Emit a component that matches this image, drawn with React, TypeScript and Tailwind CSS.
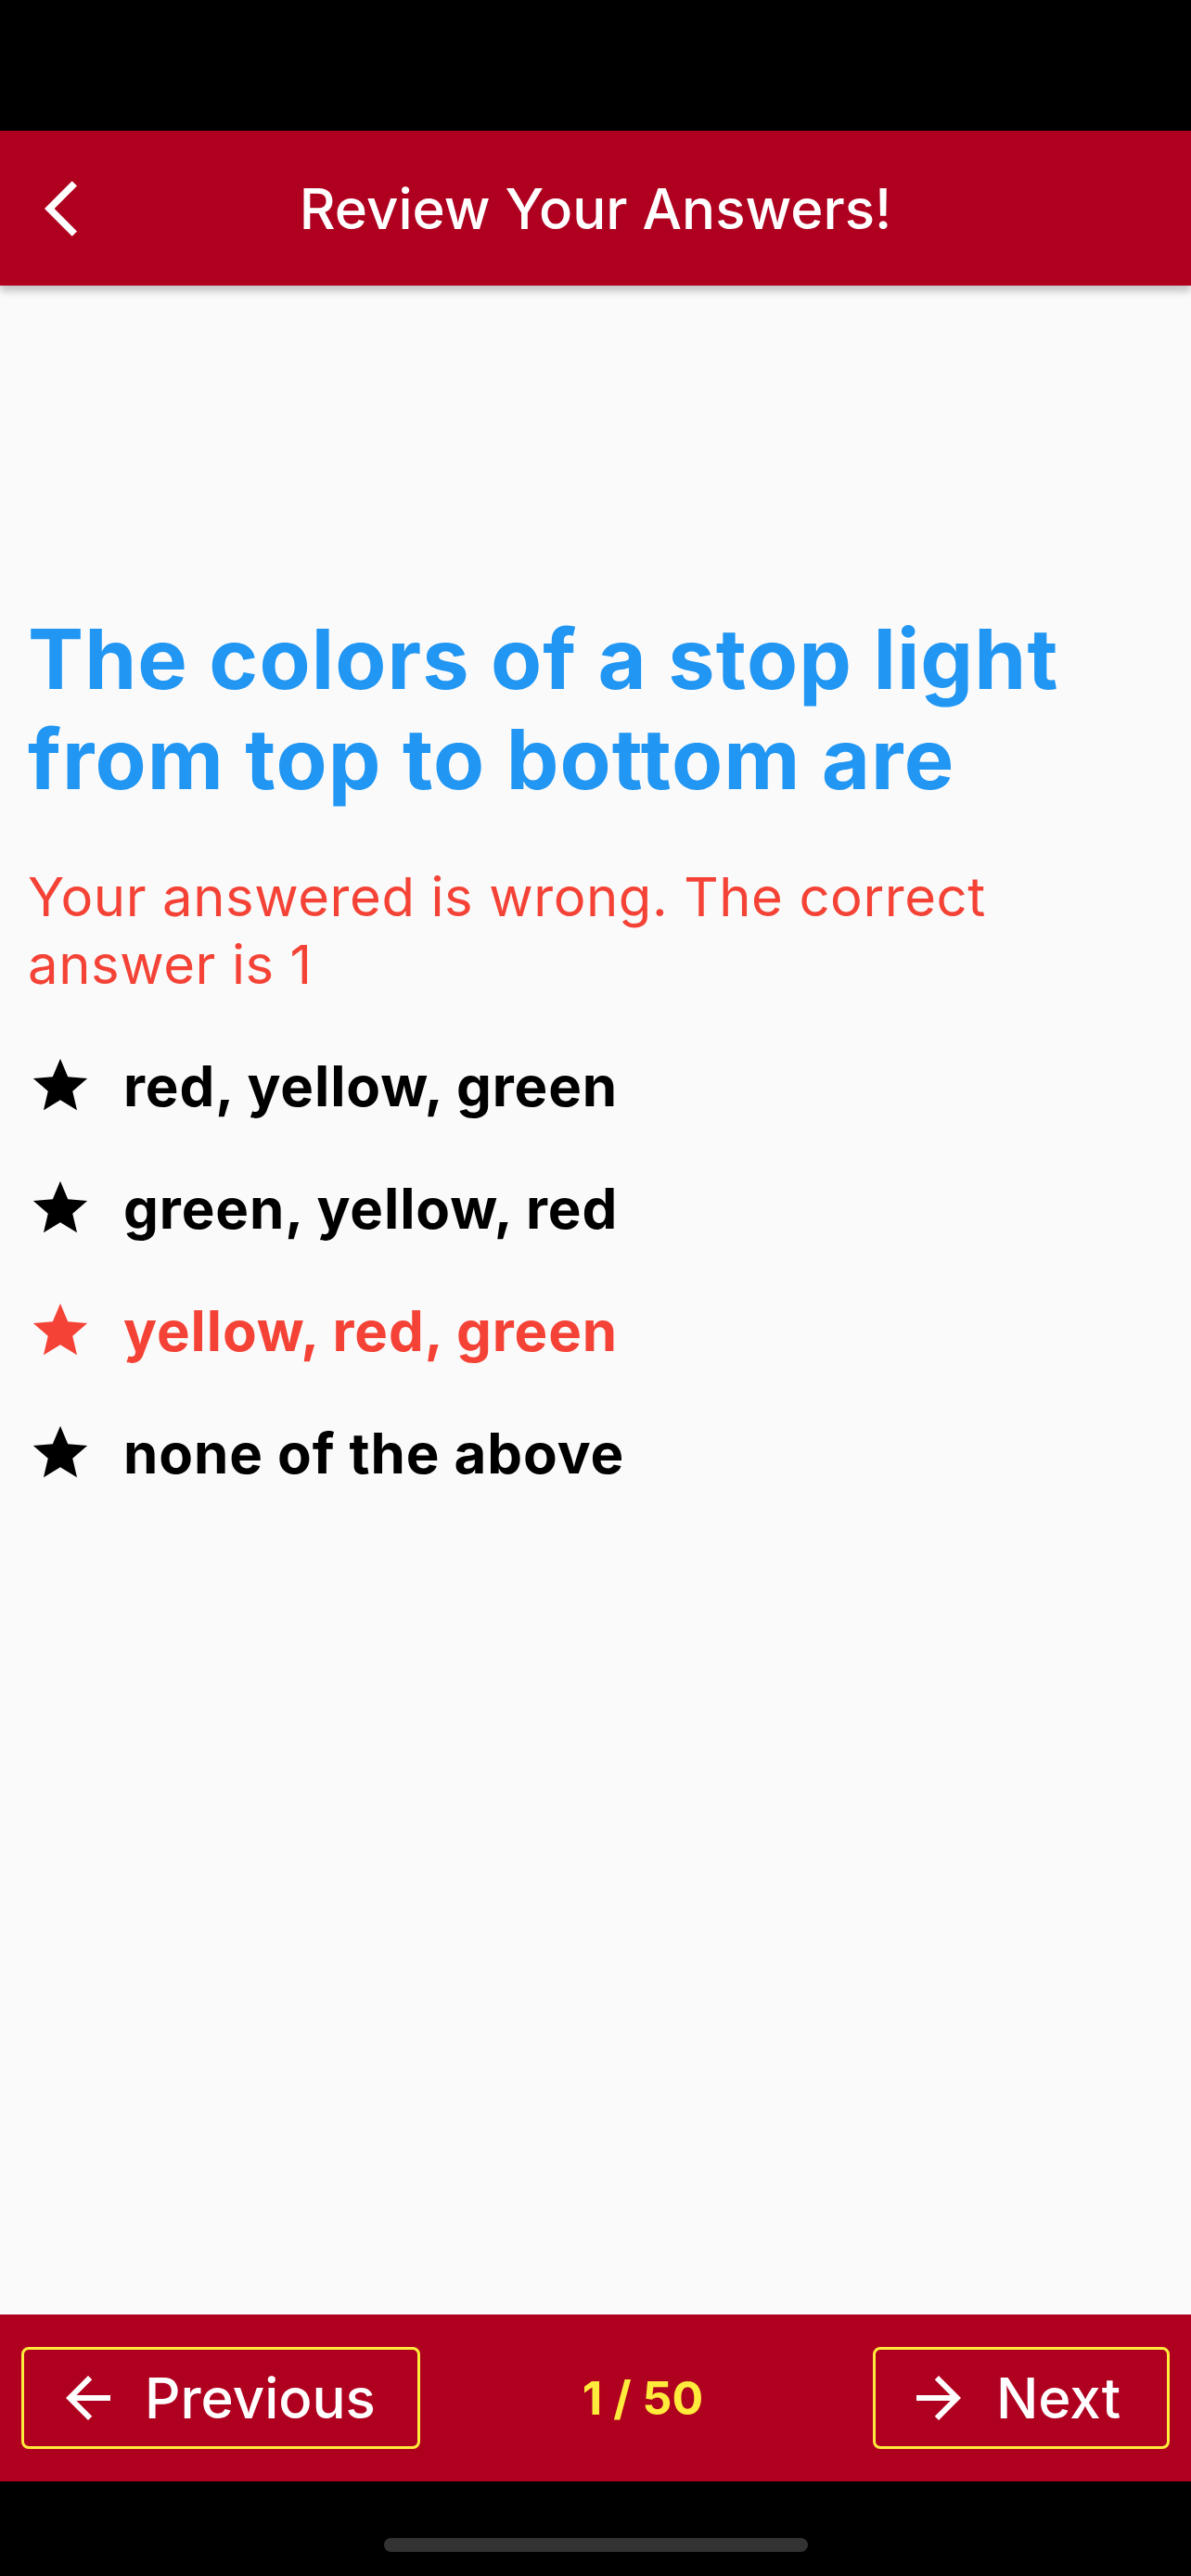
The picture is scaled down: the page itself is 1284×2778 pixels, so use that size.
import React from "react";

const options = [
    { text: "red, yellow, green", wrong: false },
    { text: "green, yellow, red", wrong: false },
    { text: "yellow, red, green", wrong: true },
    { text: "none of the above", wrong: false },
];

const Star = ({ color }: { color: string }) => (
    <svg width="70" height="70" viewBox="0 0 24 24" className="shrink-0">
        <path fill={color} d="M12 17.27L18.18 21l-1.64-7.03L22 9.24l-7.19-.61L12 2 9.19 8.63 2 9.24l5.46 4.73L5.82 21z" />
    </svg>
);

const App = () => {
    return (
        <div className="w-[1284px] h-[2778px] flex flex-col bg-[#fafafa]" style={{ fontFamily: "Inter, 'Noto Sans', sans-serif" }}>
            {/* status bar */}
            <div className="h-[141px] bg-black shrink-0" />

            {/* app bar */}
            <div className="h-[167px] shrink-0 bg-[#b00020] grid grid-cols-[168px_1fr_168px] items-center relative z-10 shadow-[0_6px_8px_rgba(0,0,0,0.22)]">
                <div className="pl-[48px] flex items-center">
                    <svg width="72" height="72" viewBox="0 0 24 24">
                        <path fill="#ffffff" d="M11.67 3.87L9.9 2.1 0 12l9.9 9.9 1.77-1.77L3.54 12z" />
                    </svg>
                </div>
                <div className="text-center text-white text-[60px] font-medium">Review Your Answers!</div>
                <div />
            </div>

            {/* content */}
            <div className="flex-1 px-[30px] pt-[349px]">
                <h1 className="text-[90px] leading-[108px] font-bold text-[#2196f3] tracking-[0.012em]">
                    The colors of a stop light from top to bottom are
                </h1>
                <p className="mt-[58px] text-[58px] leading-[73px] text-[#f44336] tracking-[0.01em]">
                    Your answered is wrong. The correct answer is 1
                </p>
                <div className="mt-[28px] flex flex-col">
                    {options.map((o, i) => (
                        <div key={i} className="h-[132px] flex items-center">
                            <Star color={o.wrong ? "#f44336" : "#000000"} />
                            <span className={"ml-[33px] text-[60px] leading-[72px] font-bold tracking-[0.015em] " + (o.wrong ? "text-[#f44336]" : "text-black")}>
                                {o.text}
                            </span>
                        </div>
                    ))}
                </div>
            </div>

            {/* bottom bar */}
            <div className="h-[180px] shrink-0 bg-[#b00020] flex items-center justify-between px-[23px]">
                <div className="w-[430px] h-[110px] border-[3px] border-[#ffeb3b] rounded-[8px] flex items-center pl-[33px]">
                    <svg width="72" height="72" viewBox="0 0 24 24">
                        <path fill="#ffffff" d="M20 11H7.83l5.59-5.59L12 4l-8 8 8 8 1.41-1.41L7.83 13H20v-2z" />
                    </svg>
                    <span className="ml-[25px] text-white text-[60px] font-medium">Previous</span>
                </div>
                <div className="text-[#ffeb3b] text-[50px] font-bold mr-[8px]">1 / 50</div>
                <div className="w-[320px] h-[110px] border-[3px] border-[#ffeb3b] rounded-[8px] flex items-center pl-[32px]">
                    <svg width="72" height="72" viewBox="0 0 24 24">
                        <path fill="#ffffff" d="M12 4l-1.41 1.41L16.17 11H4v2h12.17l-5.58 5.59L12 20l8-8z" />
                    </svg>
                    <span className="ml-[26px] text-white text-[60px] font-medium">Next</span>
                </div>
            </div>

            {/* home indicator */}
            <div className="h-[102px] shrink-0 bg-black flex justify-center pt-[61px]">
                <div className="w-[457px] h-[15px] rounded-full bg-[#333333]" />
            </div>
        </div>
    );
};

export default App;
